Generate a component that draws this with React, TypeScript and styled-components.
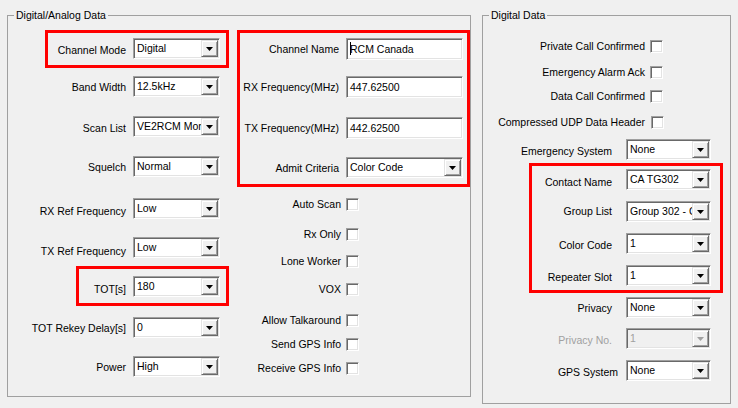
import styled, { createGlobalStyle, css } from 'styled-components';

const GlobalStyle = createGlobalStyle`
  html, body {
    margin: 0;
    padding: 0;
    background: #f0f0f0;
  }
  body {
    width: 738px;
    height: 408px;
    overflow: hidden;
    font-family: "Liberation Sans", Arial, sans-serif;
    font-size: 10.5px;
    color: #000;
  }
`;

const sunken = css`
  box-sizing: border-box;
  border: 1px solid;
  border-color: #a0a0a0 #ffffff #ffffff #a0a0a0;
  box-shadow: inset 1px 1px 0 #696969, inset -1px -1px 0 #e3e3e3;
`;

const Window = styled.div`
  box-sizing: border-box;
  display: flex;
  align-items: flex-start;
  gap: 11px;
  width: 738px;
  height: 408px;
  padding: 9px 0 0 7px;
`;

const Group = styled.fieldset<{ $width: number; $padBottom: number }>`
  box-sizing: border-box;
  width: ${(p) => p.$width}px;
  margin: 0;
  padding: 0 0 ${(p) => p.$padBottom}px 6px;
  border: 1px solid #a0a0a0;
  min-width: 0;
`;

const Legend = styled.legend`
  padding: 0 2px;
  margin: 0;
  line-height: 13px;
`;

const Columns = styled.div`
  display: flex;
  align-items: flex-start;
`;

const Column = styled.div<{ $width: number; $ml?: number }>`
  display: flex;
  flex-direction: column;
  width: ${(p) => p.$width}px;
  margin-left: ${(p) => p.$ml ?? 0}px;
`;

const Highlight = styled.div<{ $mt: number; $ml: number; $mr: number; $pad: string }>`
  display: flex;
  flex-direction: column;
  margin: ${(p) => p.$mt}px ${(p) => p.$mr}px 0 ${(p) => p.$ml}px;
  padding: ${(p) => p.$pad};
  border: 3px solid #ff0000;
`;

const Row = styled.div<{ $mt: number; $gap: number }>`
  display: flex;
  align-items: center;
  gap: ${(p) => p.$gap}px;
  margin-top: ${(p) => p.$mt}px;
`;

const FieldLabel = styled.span<{ $width: number; $drop: number; $disabled?: boolean }>`
  flex: none;
  width: ${(p) => p.$width}px;
  padding-top: ${(p) => p.$drop * 2}px;
  text-align: right;
  white-space: nowrap;
  line-height: 13px;
  color: ${(p) => (p.$disabled ? '#a0a0a0' : '#000')};
`;

const ComboBox = styled.div<{ $width: number; $disabled?: boolean }>`
  ${sunken}
  display: flex;
  flex: none;
  width: ${(p) => p.$width}px;
  height: 21px;
  padding: 1px;
  background: ${(p) => (p.$disabled ? '#f0f0f0' : '#ffffff')};
`;

const ComboText = styled.span<{ $disabled?: boolean }>`
  flex: 1;
  min-width: 0;
  overflow: hidden;
  white-space: nowrap;
  padding-left: 2px;
  line-height: 16px;
  color: ${(p) => (p.$disabled ? '#a0a0a0' : '#000')};
`;

const DropButton = styled.span`
  box-sizing: border-box;
  display: flex;
  align-items: center;
  justify-content: center;
  flex: none;
  width: 17px;
  height: 17px;
  background: #f0f0f0;
  border: 1px solid;
  border-color: #e3e3e3 #696969 #696969 #e3e3e3;
  box-shadow: inset 1px 1px 0 #ffffff, inset -1px -1px 0 #a0a0a0;
`;

const TextBox = styled.div<{ $width: number }>`
  ${sunken}
  flex: none;
  width: ${(p) => p.$width}px;
  height: 22px;
  padding: 2px 2px 0 3px;
  background: #ffffff;
  line-height: 17px;
  white-space: nowrap;
  overflow: hidden;
`;

const Caret = styled.span`
  display: inline-block;
  width: 1px;
  height: 13px;
  margin-right: -1px;
  vertical-align: -2px;
  background: #000;
`;

const CheckBox = styled.span`
  ${sunken}
  flex: none;
  width: 13px;
  height: 13px;
  background: #ffffff;
`;

function Arrow({ disabled }: { disabled?: boolean }) {
  return (
    <svg width="7" height="4" viewBox="0 0 7 4">
      <polygon points="0,0 7,0 3.5,4" fill={disabled ? '#a0a0a0' : '#000'} />
    </svg>
  );
}

type ComboProps = {
  label: string;
  value: string;
  mt: number;
  labelWidth: number;
  gap: number;
  width: number;
  drop?: number;
  disabled?: boolean;
};

function ComboRow({ label, value, mt, labelWidth, gap, width, drop = 1, disabled }: ComboProps) {
  return (
    <Row $mt={mt} $gap={gap}>
      <FieldLabel $width={labelWidth} $drop={drop} $disabled={disabled}>
        {label}
      </FieldLabel>
      <ComboBox $width={width} $disabled={disabled}>
        <ComboText $disabled={disabled}>{value}</ComboText>
        <DropButton>
          <Arrow disabled={disabled} />
        </DropButton>
      </ComboBox>
    </Row>
  );
}

type TextProps = {
  label: string;
  value: string;
  mt: number;
  caret?: boolean;
};

function TextRow({ label, value, mt, caret }: TextProps) {
  return (
    <Row $mt={mt} $gap={7}>
      <FieldLabel $width={99} $drop={0.5}>
        {label}
      </FieldLabel>
      <TextBox $width={117}>
        {caret && <Caret />}
        {value}
      </TextBox>
    </Row>
  );
}

type CheckProps = {
  label: string;
  mt: number;
  labelWidth: number;
  gap?: number;
};

function CheckRow({ label, mt, labelWidth, gap = 5 }: CheckProps) {
  return (
    <Row $mt={mt} $gap={gap}>
      <FieldLabel $width={labelWidth} $drop={0}>
        {label}
      </FieldLabel>
      <CheckBox />
    </Row>
  );
}

const left = { labelWidth: 112, gap: 7, width: 87 };
const right = { labelWidth: 123, gap: 14, width: 85 };
const redRight = { labelWidth: 80, gap: 14, width: 85 };

export default function App() {
  return (
    <>
      <GlobalStyle />
      <Window>
        <Group $width={464} $padBottom={19}>
          <Legend>Digital/Analog Data</Legend>
          <Columns>
            <Column $width={206}>
              <Highlight $mt={8} $ml={31} $mr={-9} $pad="5px 6px 6px 0">
                <ComboRow {...left} labelWidth={78} mt={0} drop={2} label="Channel Mode" value="Digital" />
              </Highlight>
              <ComboRow {...left} mt={8} label="Band Width" value="12.5kHz" />
              <ComboRow {...left} mt={19} drop={1.5} label="Scan List" value="VE2RCM Montreal" />
              <ComboRow {...left} mt={19} label="Squelch" value="Normal" />
              <ComboRow {...left} mt={21} drop={3} label="RX Ref Frequency" value="Low" />
              <ComboRow {...left} mt={18} drop={3.5} label="TX Ref Frequency" value="Low" />
              <Highlight $mt={8} $ml={62} $mr={-9} $pad="7px 6px 6px 0">
                <ComboRow {...left} labelWidth={47} mt={0} drop={3} label="TOT[s]" value="180" />
              </Highlight>
              <ComboRow {...left} mt={11} label="TOT Rekey Delay[s]" value="0" />
              <ComboRow {...left} mt={18} label="Power" value="High" />
            </Column>
            <Column $width={233} $ml={17}>
              <Highlight $mt={8} $ml={0} $mr={0} $pad="5px 4px 6px 0">
                <TextRow mt={0} caret label="Channel Name" value="RCM Canada" />
                <TextRow mt={16} label="RX Frequency(MHz)" value="447.62500" />
                <TextRow mt={19} label="TX Frequency(MHz)" value="442.62500" />
                <ComboRow labelWidth={99} gap={7} width={117} mt={18} drop={0.5} label="Admit Criteria" value="Color Code" />
              </Highlight>
              <CheckRow labelWidth={104} mt={11} label="Auto Scan" />
              <CheckRow labelWidth={104} mt={17} label="Rx Only" />
              <CheckRow labelWidth={104} mt={14} label="Lone Worker" />
              <CheckRow labelWidth={104} mt={15} label="VOX" />
              <CheckRow labelWidth={104} mt={18} label="Allow Talkaround" />
              <CheckRow labelWidth={104} mt={11} label="Send GPS Info" />
              <CheckRow labelWidth={104} mt={11} label="Receive GPS Info" />
            </Column>
          </Columns>
        </Group>
        <Group $width={249} $padBottom={22}>
          <Legend>Digital Data</Legend>
          <Column $width={222}>
            <CheckRow labelWidth={156} mt={18} label="Private Call Confirmed" />
            <CheckRow labelWidth={156} mt={13} label="Emergency Alarm Ack" />
            <CheckRow labelWidth={156} mt={11} label="Data Call Confirmed" />
            <CheckRow labelWidth={156} gap={6} mt={13} label="Compressed UDP Data Header" />
            <ComboRow {...right} mt={10} drop={2} label="Emergency System" value="None" />
            <Highlight $mt={3} $ml={40} $mr={-12} $pad="3px 9px 4px 0">
              <ComboRow {...redRight} mt={0} drop={2.5} label="Contact Name" value="CA TG302" />
              <ComboRow {...redRight} mt={11} drop={0} label="Group List" value="Group 302 - CA" />
              <ComboRow {...redRight} mt={11} drop={2} label="Color Code" value="1" />
              <ComboRow {...redRight} mt={11} drop={1.5} label="Repeater Slot" value="1" />
            </Highlight>
            <ComboRow {...right} mt={4} drop={1} label="Privacy" value="None" />
            <ComboRow {...right} mt={10} drop={1.5} disabled label="Privacy No." value="1" />
            <ComboRow {...right} labelWidth={129} gap={8} mt={11} drop={1.5} label="GPS System" value="None" />
          </Column>
        </Group>
      </Window>
    </>
  );
}
